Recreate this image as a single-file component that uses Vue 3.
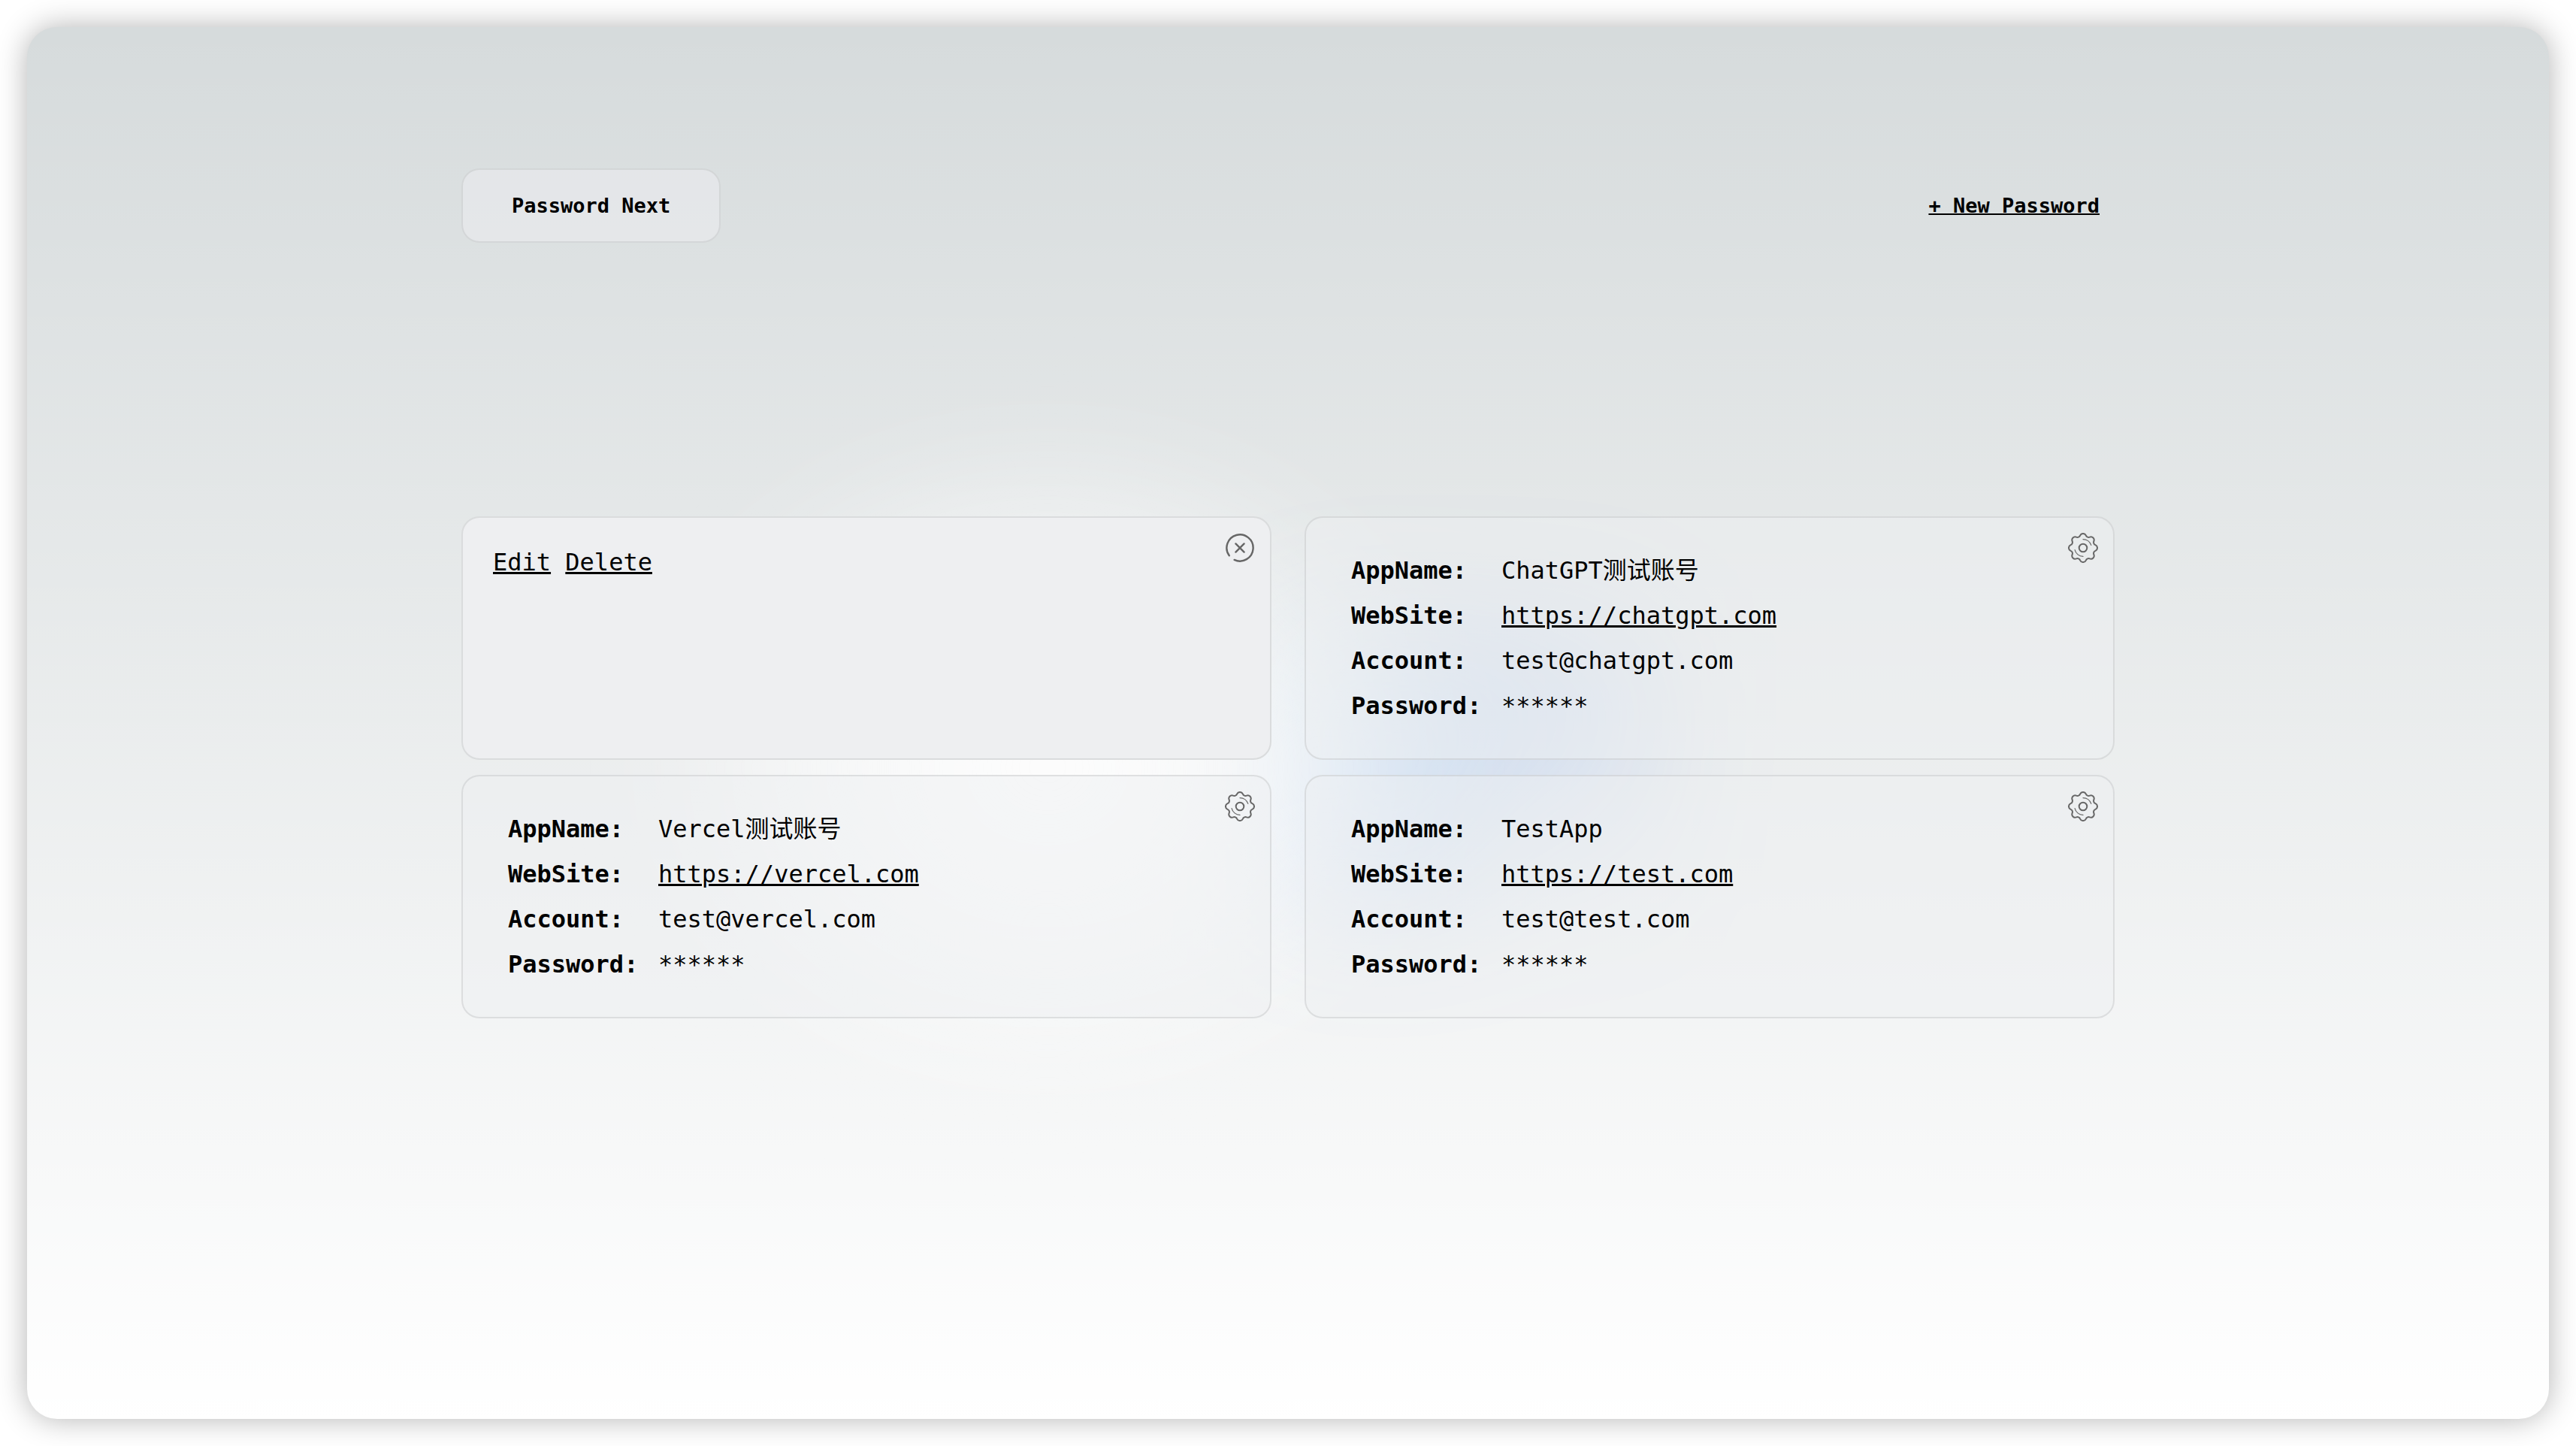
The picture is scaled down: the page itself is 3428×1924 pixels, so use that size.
<script setup>
import { reactive } from 'vue'

const entries = reactive([
  { app: 'Next', site: 'https://next.com', account: 'test@next.com', open: true },
  { app: 'ChatGPT测试账号', site: 'https://chatgpt.com', account: 'test@chatgpt.com', open: false },
  { app: 'Vercel测试账号', site: 'https://vercel.com', account: 'test@vercel.com', open: false },
  { app: 'TestApp', site: 'https://test.com', account: 'test@test.com', open: false },
])
</script>

<template>
  <main class="shell">
    <header class="bar">
      <h1 class="brand">Password Next</h1>
      <a class="add" href="#new">+ New Password</a>
    </header>

    <section class="stage">
      <div class="grid">
        <article v-for="entry in entries" :key="entry.app" class="card" :class="{ open: entry.open }">
          <nav v-if="entry.open" class="actions">
            <a href="#edit">Edit</a> <a href="#delete">Delete</a>
          </nav>
          <dl v-else class="details">
            <div class="row"><dt>AppName:</dt><dd>{{ entry.app }}</dd></div>
            <div class="row"><dt>WebSite:</dt><dd><a :href="entry.site">{{ entry.site }}</a></dd></div>
            <div class="row"><dt>Account:</dt><dd>{{ entry.account }}</dd></div>
            <div class="row"><dt>Password:</dt><dd>******</dd></div>
          </dl>
          <button
            class="toggle"
            type="button"
            :aria-label="entry.open ? 'Close' : 'Settings'"
            @click="entry.open = !entry.open"
          >
            <svg v-if="entry.open" viewBox="-20 -20 40 40" aria-hidden="true">
              <g fill="none" stroke="#666" stroke-width="2.4" stroke-linecap="round">
                <path d="M-14.2 10.3A17.6 17.6 0 1 1 -7.4 15.9" />
                <path d="M-5.6 -5.6L5.6 5.6M5.6 -5.6L-5.6 5.6" />
              </g>
            </svg>
            <svg v-else viewBox="-20 -20 40 40" aria-hidden="true">
              <g fill="none" stroke="#666" stroke-width="2" stroke-linecap="round">
                <path
                  d="M-3.82 -16.56A4.2 4.2 0 0 1 3.82 -16.56A3.8 3.8 0 0 0 9.01 -14.42A4.2 4.2 0 0 1 14.42 -9.01A3.8 3.8 0 0 0 16.56 -3.82A4.2 4.2 0 0 1 16.56 3.82A3.8 3.8 0 0 0 14.42 9.01A4.2 4.2 0 0 1 9.01 14.42A3.8 3.8 0 0 0 3.82 16.56A4.2 4.2 0 0 1 -3.82 16.56A3.8 3.8 0 0 0 -9.01 14.42A4.2 4.2 0 0 1 -14.42 9.01A3.8 3.8 0 0 0 -16.56 3.82A4.2 4.2 0 0 1 -16.56 -3.82A3.8 3.8 0 0 0 -14.42 -9.01A4.2 4.2 0 0 1 -9.01 -14.42A3.8 3.8 0 0 0 -3.82 -16.56Z"
                />
                <circle r="5.3" />
                <path stroke-width="1.2" d="M0 -11.4A11.4 11.4 0 0 1 10.8 -3.6M0 11.4A11.4 11.4 0 0 1 -10.9 2.6" />
              </g>
            </svg>
          </button>
        </article>
      </div>
    </section>
  </main>
</template>

<style>
body {
  background: #fff;
}
</style>

<style scoped>
.shell {
  box-sizing: border-box;
  display: flex;
  flex-direction: column;
  align-items: center;
  min-height: calc(100vh - 72px);
  margin: 36px;
  padding: 188px 40px 170px;
  border-radius: 40px;
  background: linear-gradient(to bottom, transparent, #fff) rgb(214, 219, 220);
  box-shadow: 0 0 40px rgba(0, 0, 0, 0.3);
  color: #000;
  font-family: "DejaVu Sans Mono", "Noto Sans CJK SC", monospace;
  font-size: 32px;
}

a {
  color: inherit;
  text-decoration: underline;
  text-decoration-thickness: 3px;
}

.bar {
  display: flex;
  justify-content: space-between;
  align-items: center;
  width: 100%;
  max-width: 2200px;
  font-size: 27px;
  font-weight: 700;
}

.brand {
  margin: 0;
  padding: 32px 65px;
  border: 2px solid rgba(172, 175, 176, 0.3);
  border-radius: 24px;
  background: rgba(238, 238, 241, 0.5);
  font-size: 27px;
  line-height: 31px;
}

.add {
  margin-right: 20px;
  line-height: 31px;
  text-decoration-thickness: 2px;
}

.stage {
  position: relative;
  z-index: 0;
  flex: 1;
  display: flex;
  justify-content: center;
  align-items: center;
  width: 100%;
}

/* Soft white and blue lights behind the cards */
.stage::before,
.stage::after {
  content: "";
  position: absolute;
  left: 50%;
  filter: blur(90px);
}

.stage::before {
  z-index: -1;
  width: 960px;
  height: 760px;
  margin-left: -800px;
  border-radius: 50%;
  background: radial-gradient(rgba(255, 255, 255, 1), rgba(255, 255, 255, 0));
}

.stage::after {
  z-index: -2;
  width: 480px;
  height: 360px;
  background: conic-gradient(
    from 180deg at 50% 50%,
    #3b9bff2b 0deg,
    #2a7cff2b 55deg,
    #7cc4ff2b 120deg,
    #1f6dff2b 180deg,
    transparent 360deg
  );
}

.grid {
  display: grid;
  grid-template-columns: repeat(2, minmax(0, 1fr));
  gap: 20px 44px;
  width: 100%;
  max-width: 2200px;
}

.card {
  position: relative;
  padding: 40px;
  border: 2px solid rgba(172, 175, 176, 0.3);
  border-radius: 24px;
  background: rgba(238, 239, 241, 0.5);
}

.card.open {
  background: rgb(238, 239, 241);
}

.details {
  margin: 0;
  padding: 0 20px;
}

.row {
  display: flex;
  line-height: 60px;
}

dt {
  width: 200px;
  font-weight: 700;
}

dd {
  margin: 0;
}

.toggle {
  position: absolute;
  top: 20px;
  right: 20px;
  width: 40px;
  height: 40px;
  padding: 0;
  border: 0;
  background: none;
  cursor: pointer;
}

.toggle svg {
  display: block;
  width: 40px;
  height: 40px;
}
</style>
